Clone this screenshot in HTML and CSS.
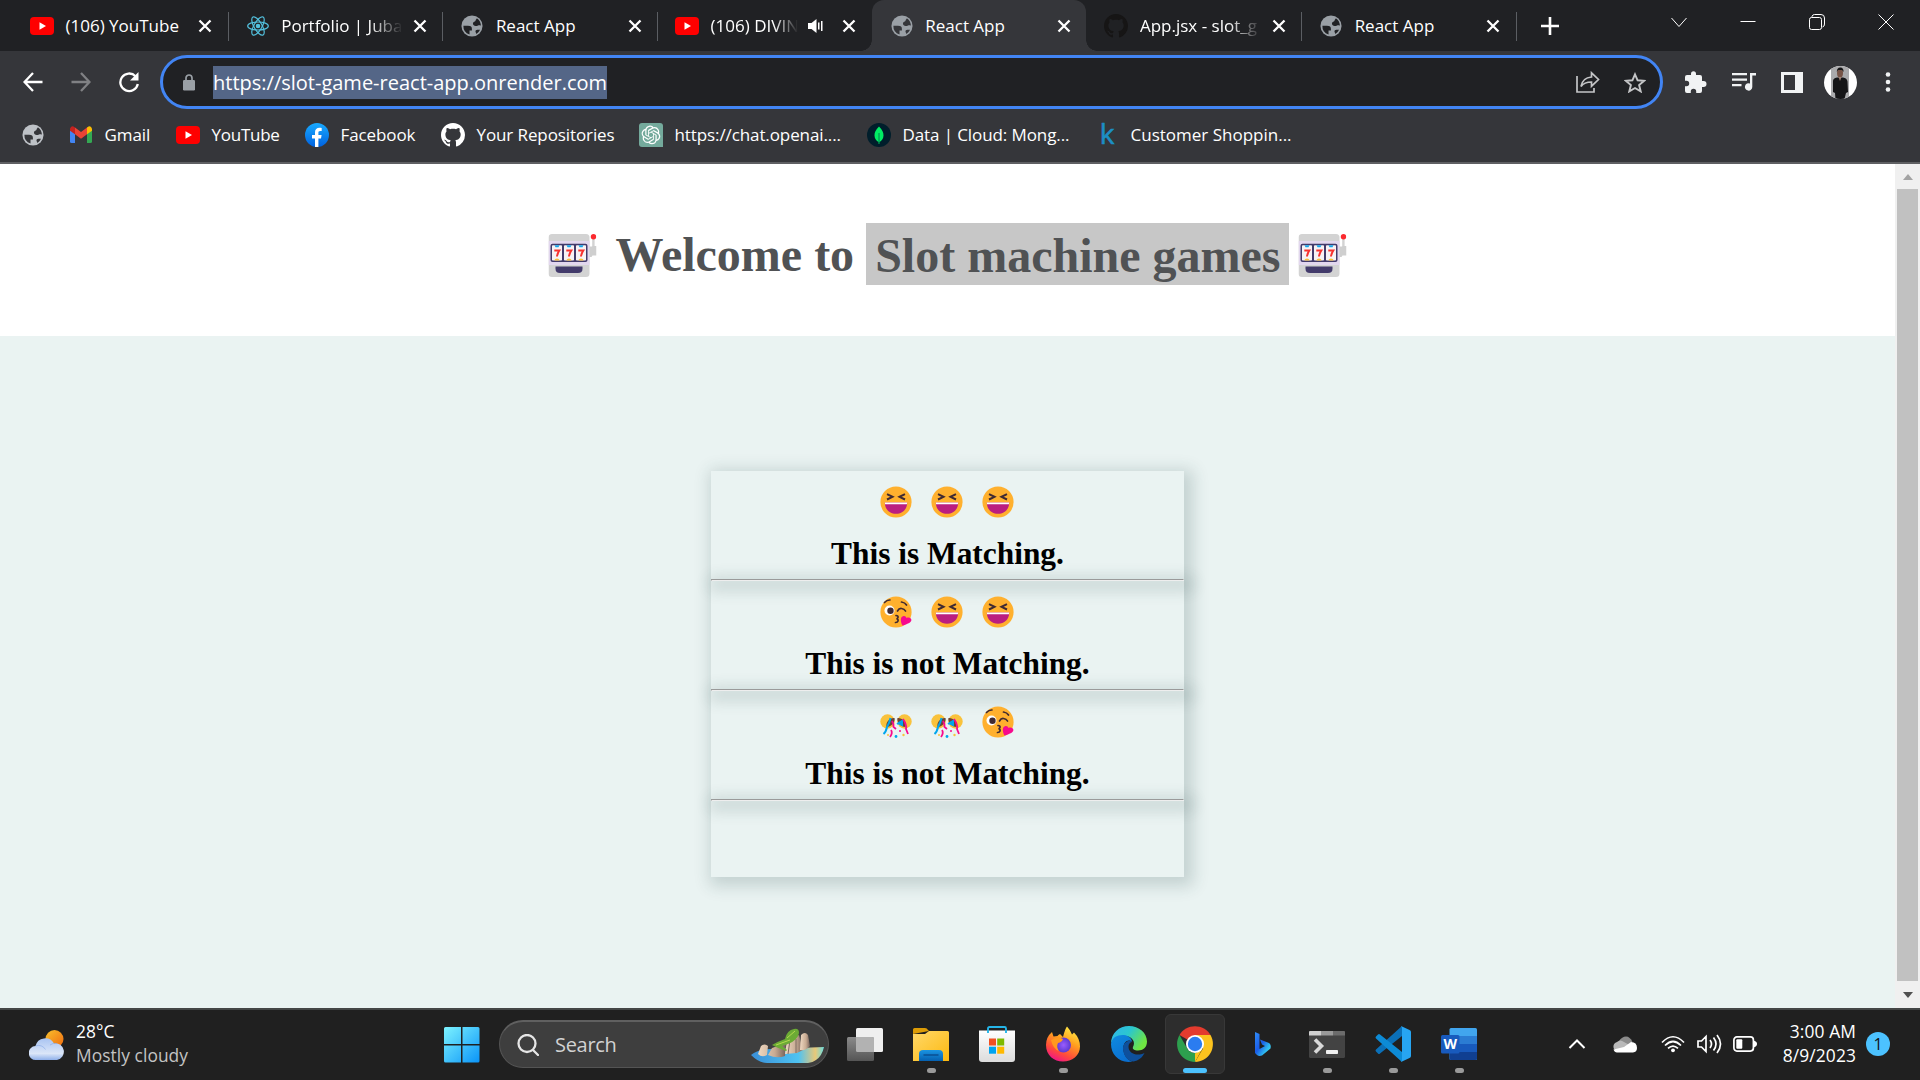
FILE: index.html
```html
<!DOCTYPE html>
<html lang="en">
<head>
<meta charset="utf-8">
<title>React App</title>
<link rel="stylesheet" href="styles.css">
</head>
<body>
<svg class="defs" width="0" height="0" aria-hidden="true">
  <defs>
    <linearGradient id="g-win" x1="0" y1="0" x2="1" y2="1"><stop offset="0" stop-color="#7df3ff"/><stop offset="1" stop-color="#0a94f8"/></linearGradient>
    <linearGradient id="g-sun" x1="0" y1="0" x2="1" y2="1"><stop offset="0" stop-color="#f8c02c"/><stop offset="1" stop-color="#f06a10"/></linearGradient>
    <linearGradient id="g-cloud" x1="0" y1="0" x2="0" y2="1"><stop offset="0" stop-color="#a9c4f2"/><stop offset=".7" stop-color="#dbe6f8"/><stop offset="1" stop-color="#8fb0ea"/></linearGradient>
    <linearGradient id="g-folder" x1="0" y1="0" x2="1" y2="1"><stop offset="0" stop-color="#ffd869"/><stop offset="1" stop-color="#fdb910"/></linearGradient>
    <linearGradient id="g-blue" x1="0" y1="0" x2="0" y2="1"><stop offset="0" stop-color="#1a94e2"/><stop offset="1" stop-color="#0560b0"/></linearGradient>
    <linearGradient id="g-store" x1="0" y1="0" x2="0" y2="1"><stop offset="0" stop-color="#fff"/><stop offset="1" stop-color="#dcdcdc"/></linearGradient>
    <linearGradient id="g-fox" x1=".8" y1="0" x2=".3" y2="1"><stop offset="0" stop-color="#fff04a"/><stop offset=".4" stop-color="#ffa01e"/><stop offset=".75" stop-color="#ff4a3c"/><stop offset="1" stop-color="#f0138a"/></linearGradient>
    <radialGradient id="g-foxball"><stop offset="0" stop-color="#9a5cff"/><stop offset="1" stop-color="#5b3ad0"/></radialGradient>
    <linearGradient id="g-edge1" x1="0" y1="0" x2="1" y2=".5"><stop offset="0" stop-color="#2fb4ee"/><stop offset=".5" stop-color="#2bc6cf"/><stop offset="1" stop-color="#6fe542"/></linearGradient>
    <linearGradient id="g-edge2" x1="0" y1="0" x2=".6" y2="1"><stop offset="0" stop-color="#0f8be0"/><stop offset="1" stop-color="#0a6fd0"/></linearGradient>
    <linearGradient id="g-bing" x1="0" y1="0" x2="1" y2="1"><stop offset="0" stop-color="#2f8df8"/><stop offset=".45" stop-color="#1b5de8"/><stop offset=".75" stop-color="#30c0f0"/><stop offset="1" stop-color="#48d8f8"/></linearGradient>
    <linearGradient id="g-sea" x1="0" y1="0" x2="1" y2="0"><stop offset="0" stop-color="#3a8fd8"/><stop offset=".65" stop-color="#4fc3f2"/><stop offset=".88" stop-color="#e9c878"/><stop offset="1" stop-color="#6cdde0"/></linearGradient>
    <linearGradient id="g-rock" x1="0" y1="0" x2="1" y2="0"><stop offset="0" stop-color="#efd9c2"/><stop offset=".6" stop-color="#c8ab93"/><stop offset="1" stop-color="#75615a"/></linearGradient>
    <linearGradient id="g-fb" x1="0" y1="0" x2="0" y2="1"><stop offset="0" stop-color="#19aaff"/><stop offset="1" stop-color="#0062e0"/></linearGradient>
    <linearGradient id="g-tv" x1="0" y1="0" x2="0" y2="1"><stop offset="0" stop-color="#8a8a8a"/><stop offset="1" stop-color="#555"/></linearGradient>

    <symbol id="youtube" viewBox="0 0 24 18"><rect width="24" height="18" rx="4" fill="#f00"/><path d="M9.5 5.2v7.6l6.5-3.8z" fill="#fff"/></symbol>
    <symbol id="globe" viewBox="0 0 24 24"><circle cx="12" cy="12" r="11.5"/><path class="globe-cut" d="M2.6 11.8h5c3.3 0 4.3 1.3 4.3 3.4v1.6h-2.6v4.6A9.8 9.8 0 0 1 2.6 11.8zM21.6 12c-.3-.8-1.2-.8-2.4-.8-1 0-1 .9-3.3.9-1.5 0-2.9-1.2-2.9-2.7 0-1.3 1-1.4 2.4-2.5.7-.6.3-1.600 1-2.100.6-.4.9-.6.9-1.200A9.800 9.800 0 0 1 21.600 12zM16.500 20.600c2.300-1.300 3.500-3 4.300-4.600h-3c-1.300 0-2 .8-2 1.800 0 1.200.7 1.500.7 2.800z"/></symbol>
    <symbol id="github" viewBox="0 0 16 16"><path d="M8 0C3.58 0 0 3.58 0 8c0 3.54 2.29 6.53 5.47 7.59.4.07.55-.17.55-.38 0-.19-.01-.82-.01-1.49-2.01.37-2.53-.49-2.69-.94-.09-.23-.48-.94-.82-1.13-.28-.15-.68-.52-.01-.53.63-.01 1.08.58 1.23.82.72 1.21 1.87.87 2.33.66.07-.52.28-.87.51-1.07-1.78-.2-3.64-.89-3.64-3.95 0-.87.31-1.59.82-2.15-.08-.2-.36-1.02.08-2.12 0 0 .67-.21 2.2.82.64-.18 1.32-.27 2-.27s1.36.09 2 .27c1.53-1.04 2.2-.82 2.2-.82.44 1.1.16 1.92.08 2.12.51.56.82 1.27.82 2.15 0 3.07-1.87 3.75-3.65 3.95.29.25.54.73.54 1.48 0 1.07-.01 1.93-.01 2.2 0 .21.15.46.55.38A8.01 8.01 0 0 0 16 8c0-4.42-3.58-8-8-8z"/></symbol>
    <symbol id="close" viewBox="0 0 14 14"><path d="M1.500 1.500l11 11M12.500 1.500l-11 11" stroke="#fff" stroke-width="2.300" fill="none"/></symbol>
    <symbol id="slot" viewBox="0 0 48 43">
      <rect y="0" width="41" height="43" rx="3.500" fill="#d3d3d3"/><rect y="7" width="41" height="24" fill="#e2d7ee"/>
      <rect x="43.700" y="3" width="2.400" height="12" fill="#d3d3d3"/><path d="M41 12.500h2.500l1-.5h3.500v9.500h-4l-1 1.500h-2z" fill="#cfcfcf"/><circle cx="45" cy="2.800" r="2.700" fill="#fb2a2f"/>
      <rect x="2" y="9.700" width="37" height="18.300" rx="2" fill="#433b6b"/>
      <g fill="#f7f2f5"><rect x="3.500" y="11.200" width="10" height="15.400" rx=".8"/><rect x="15.500" y="11.200" width="10" height="15.400" rx=".8"/><rect x="27.500" y="11.200" width="10" height="15.400" rx=".8"/></g>
      <g fill="#18a4ea"><path d="M6 11.200h5l-1 2h-3zM18 11.200h5l-1 2h-3zM30 11.200h5l-1 2h-3z"/></g>
      <g fill="#f8c13c"><path d="M6 26.600c0-2.800 5-2.800 5 0zM18 26.600c0-2.800 5-2.800 5 0zM30 26.600c0-2.800 5-2.800 5 0z"/></g>
      <g fill="none" stroke="#f8312f" stroke-width="2"><path d="M5.800 16.500h5q-2 3-2.300 6M17.800 16.500h5q-2 3-2.300 6M29.800 16.500h5q-2 3-2.300 6"/></g>
      <path d="M7 32.500h27v2.200q0 4.300-4.500 4.300h-18q-4.500 0-4.500-4.300z" fill="#433b6b"/>
    </symbol>
    <symbol id="laugh" viewBox="0 0 32 32">
      <circle cx="16" cy="16" r="15.600" fill="#ffb02e"/>
      <path d="M7 8.200l5.500 2.600L7 13.500M25 8.200l-5.500 2.600L25 13.500" fill="none" stroke="#402a32" stroke-width="2"/>
      <path d="M4.800 16.500h22.400c0 7-5 11.300-11.200 11.300S4.800 23.500 4.800 16.500z" fill="#bb1d80"/><path d="M4.800 16.500h22.400l-.3 1.700H5.100z" fill="#fff"/>
    </symbol>
    <symbol id="kiss" viewBox="0 0 32 32">
      <circle cx="16" cy="16" r="15.600" fill="#ffb02e"/><circle cx="9.500" cy="14.500" r="5" fill="#fff"/><circle cx="10.500" cy="14.800" r="3.200" fill="#402a32"/>
      <path d="M4.500 6.500Q7 3.800 10 4M21.500 6q3.500.5 5 3M17.500 15q1.500-2.800 4-2.500 3 .3 4 2.500M16 19.500q2.500.3 2 2-.3 1-1.500 1.300 2 .5 1.500 2.200-.4 1.500-2.500 1.500" fill="none" stroke="#402a32" stroke-width="1.700" stroke-linecap="round"/>
      <path d="M22.500 29.500c-2.200-4-2.400-8.300.5-9.300 2-.6 3 .5 3.500 1.800 1.300-.6 3-.7 4.300.6 1.800 2-.5 5-8.300 6.900z" fill="#f70a8d"/>
    </symbol>
    <symbol id="confetti" viewBox="0 0 32 32">
      <circle cx="7.500" cy="15.500" r="7.200" fill="#f9c23c"/><circle cx="24.500" cy="15.500" r="7.200" fill="#f9c23c"/>
      <path d="M6.500 21C5.500 16 10 11.500 14.500 12c1 3-2.500 9-8 9zM25.500 21c1-5-3.500-9.500-8-9-1 3 2.500 9 8 9z" fill="#6d4534"/>
      <path d="M10.500 12q-1 5-3.500 9-1 5-3.500 7M17 18l5-3v4l-4-2" fill="none" stroke="#00a6ed" stroke-width="2"/>
      <path d="M12 15q2 3 1.500 6l2.500 2M11 24q2 3-1 7M23 13q4 6 3 10l2 5" fill="none" stroke="#f70a8d" stroke-width="1.800"/>
      <circle cx="16" cy="30.500" r="1.400" fill="#00a6ed"/><circle cx="20" cy="25" r="1" fill="#f70a8d"/><circle cx="23.500" cy="29" r="1.200" fill="#f9c23c"/><circle cx="8" cy="29" r="1" fill="#f9c23c"/>
    </symbol>
  </defs>
</svg>

<div class="screen">
  <header class="tabstrip">
    <div class="tab first"><span class="fav"><svg width="24" height="18"><use href="#youtube"/></svg></span><span class="tab-title">(106) YouTube</span><svg class="x" width="14" height="14"><use href="#close"/></svg></div>
    <div class="tab"><span class="fav"><svg width="22" height="22" viewBox="0 0 22 22" fill="none" stroke="#53c1de" stroke-width="1.200"><ellipse cx="11" cy="11" rx="10.300" ry="4"/><ellipse cx="11" cy="11" rx="10.300" ry="4" transform="rotate(60 11 11)"/><ellipse cx="11" cy="11" rx="10.300" ry="4" transform="rotate(120 11 11)"/><circle cx="11" cy="11" r="1.700" fill="#53c1de"/></svg></span><span class="tab-title fade">Portfolio | Juba</span><svg class="x" width="14" height="14"><use href="#close"/></svg></div>
    <div class="tab"><span class="fav globe"><svg width="22" height="22"><use href="#globe"/></svg></span><span class="tab-title">React App</span><svg class="x" width="14" height="14"><use href="#close"/></svg></div>
    <div class="tab no-sep"><span class="fav"><svg width="24" height="18"><use href="#youtube"/></svg></span><span class="tab-title fade">(106) DIVIN</span><svg class="sound" width="16" height="16" viewBox="0 0 16 16" fill="#fff"><path d="M0 5h3.500L8.500 1v14l-5-4H0zM10 4.500h1.500v7H10zM13 3h1.500v10H13z"/></svg><svg class="x" width="14" height="14"><use href="#close"/></svg></div>
    <div class="tab active"><span class="fav globe"><svg width="22" height="22"><use href="#globe"/></svg></span><span class="tab-title">React App</span><svg class="x" width="14" height="14"><use href="#close"/></svg></div>
    <div class="tab"><span class="fav"><svg width="24" height="24" fill="#161515"><use href="#github"/></svg></span><span class="tab-title fade">App.jsx - slot_g</span><svg class="x" width="14" height="14"><use href="#close"/></svg></div>
    <div class="tab"><span class="fav globe"><svg width="22" height="22"><use href="#globe"/></svg></span><span class="tab-title">React App</span><svg class="x" width="14" height="14"><use href="#close"/></svg></div>
    <svg class="new-tab" width="18" height="18" viewBox="0 0 18 18"><path d="M9 0v18M0 9h18" stroke="#fff" stroke-width="2.600"/></svg>
    <div class="window-buttons">
      <svg width="16" height="16" viewBox="0 0 16 16"><path d="M.5 4L8 12.500 15.500 4"/></svg>
      <svg width="16" height="16" viewBox="0 0 16 16"><path d="M.5 7.500h15"/></svg>
      <svg width="16" height="16" viewBox="0 0 16 16"><rect x=".5" y="3.500" width="12" height="12" rx="2"/><path d="M3 3.500V2.500Q3.500.5 5.500.5h6.500q3.500 0 3.500 3.500v6q0 2.500-2 3"/></svg>
      <svg width="16" height="16" viewBox="0 0 16 16"><path d="M.5.5l15 15M15.500.5l-15 15"/></svg>
    </div>
  </header>

  <div class="toolbar">
    <nav class="nav-buttons">
      <svg width="20" height="20" viewBox="0 0 20 20" stroke="#fff"><path d="M19.500 10H1.500M10 1L1.500 10l8.500 9"/></svg>
      <svg width="20" height="20" viewBox="0 0 20 20" stroke="#808184"><path d="M.5 10h18M10 1l8.500 9-8.500 9"/></svg>
      <svg width="22" height="22" viewBox="0 0 22 22" stroke="#fff"><path d="M17.500 5.200A8.800 8.800 0 1 0 19.800 13"/><path d="M20.500 1v8.500H12z" fill="#fff" stroke="none"/></svg>
    </nav>
    <div class="omnibox">
      <svg class="lock" width="12" height="17" viewBox="0 0 12 17"><rect y="6" width="12" height="10.500" rx="1.200" fill="#9aa0a6"/><path d="M3 6.500V4a3 3 0 0 1 6 0v2.500" fill="none" stroke="#9aa0a6" stroke-width="1.700"/></svg>
      <span class="url">https://slot-game-react-app.onrender.com</span>
      <svg class="share" width="24" height="22" viewBox="0 0 24 22" fill="none" stroke="#c4c5c7" stroke-width="1.700"><path d="M1 5v16h17v-4"/><path d="M5 15.500C6 9.500 10 6.500 15.500 6V1.800L22.500 8.500l-7 6.700V11C10.500 11 7.500 12 5 15.500z"/></svg>
      <svg width="22" height="21" viewBox="0 0 22 21" fill="none" stroke="#c4c5c7" stroke-width="1.900"><path d="M11 2.300l2.600 6 6.500.5-5 4.300 1.600 6.300L11 16l-5.700 3.400 1.600-6.300-5-4.300 6.500-.5z"/></svg>
    </div>
    <div class="actions">
      <svg width="22" height="22" viewBox="0 0 22 22" fill="#f1f3f4"><path d="M18.500 10H17V6a2 2 0 0 0-2-2h-4V2.700a2.500 2.500 0 0 0-5 0V4H2a2 2 0 0 0-2 2v3.800h1.500a2.700 2.700 0 0 1 0 5.400H0V20a2 2 0 0 0 2 2h3.800v-1.500a2.700 2.700 0 0 1 5.400 0V22H15a2 2 0 0 0 2-2v-4h1.500a3 3 0 0 0 0-6z"/></svg>
      <svg width="24" height="20" viewBox="0 0 24 20" fill="#f1f3f4"><path d="M0 1h15v2.200H0zM0 6.500h15v2.200H0zM0 12h9.500v2.200H0zM18 1h6v2.500h-3.700V15a3.700 3.700 0 1 1-2.300-3.500z"/></svg>
      <svg width="22" height="21" viewBox="0 0 22 21"><path fill="#f1f3f4" fill-rule="evenodd" d="M0 0h22v21H0zM3 3v15h11V3z"/></svg>
      <svg width="33" height="33" viewBox="0 0 33 33"><clipPath id="av"><circle cx="16.500" cy="16.500" r="16.500"/></clipPath><g clip-path="url(#av)"><rect width="33" height="33" fill="#fff"/><rect x="7" width="18" height="33" fill="#aaaaac"/><path d="M9 15q0-3 4-3.500h6q4 .5 4.500 4L24 26l-2 1-1.500 6h-9L11 27l-2-1z" fill="#151517"/><ellipse cx="16" cy="7" rx="3" ry="4.500" fill="#765447"/><path d="M12.800 6q0-4.500 3.500-4.500T19.500 6L18 4h-4z" fill="#151517"/><path d="M14.500 11h3L16 15z" fill="#a08275"/></g></svg>
      <svg width="6" height="20" viewBox="0 0 6 20" fill="#f1f3f4"><circle cx="3" cy="2.500" r="2.300"/><circle cx="3" cy="10" r="2.300"/><circle cx="3" cy="17.500" r="2.300"/></svg>
    </div>
  </div>

  <nav class="bookmarks">
    <div class="bm globe light"><span class="bm-icon"><svg width="22" height="22"><use href="#globe"/></svg></span></div>
    <div class="bm"><span class="bm-icon"><svg width="22" height="17" viewBox="0 0 22 17"><path d="M0 2.500V15.500Q0 17 1.500 17H5V7.500z" fill="#4285f4"/><path d="M17 7.500V17h3.500q1.500 0 1.500-1.500v-13z" fill="#34a853"/><path d="M5 1.500v6.800l6 4.500 6-4.500V1.500l-6 4.500z" fill="#ea4335"/><path d="M0 2.700v2L5 8.300V1.500L3.500.5Q1-.8 0 2.700z" fill="#c5221f"/><path d="M22 2.700v2l-5 3.600V1.500L18.500.5Q21-.8 22 2.700z" fill="#fbbc04"/></svg></span>Gmail</div>
    <div class="bm tight"><span class="bm-icon"><svg width="24" height="18"><use href="#youtube"/></svg></span>YouTube</div>
    <div class="bm"><span class="bm-icon"><svg width="24" height="24" viewBox="0 0 24 24"><circle cx="12" cy="12" r="12" fill="url(#g-fb)"/><path d="M10 24v-8.500H7V12h3V9.300C10 6.300 11.800 4.700 14.400 4.700c.9 0 1.700.1 2.300.2v3h-1.500C13.700 7.900 13.400 8.700 13.400 9.600V12h3.200l-.6 3.500h-2.600V24z" fill="#fff"/></svg></span>Facebook</div>
    <div class="bm"><span class="bm-icon"><svg width="24" height="24" fill="#fff"><use href="#github"/></svg></span>Your Repositories</div>
    <div class="bm"><span class="bm-icon"><svg width="24" height="24" viewBox="0 0 24 24"><path d="M3 0h18a3 3 0 0 1 3 3v21H3a3 3 0 0 1-3-3V3a3 3 0 0 1 3-3z" fill="#74aa9c"/><path transform="translate(2.600 2.600) scale(.78)" fill="#fff" d="M22.2819 9.8211a5.9847 5.9847 0 0 0-.5157-4.9108 6.0462 6.0462 0 0 0-6.5098-2.9A6.0651 6.0651 0 0 0 4.9807 4.1818a5.9847 5.9847 0 0 0-3.9977 2.9 6.0462 6.0462 0 0 0 .7427 7.0966 5.98 5.98 0 0 0 .511 4.9107 6.051 6.051 0 0 0 6.5146 2.9001A5.9847 5.9847 0 0 0 13.2599 24a6.0557 6.0557 0 0 0 5.7718-4.2058 5.9894 5.9894 0 0 0 3.9977-2.9001 6.0557 6.0557 0 0 0-.7475-7.0729zm-9.022 12.6081a4.4755 4.4755 0 0 1-2.8764-1.0408l.1419-.0804 4.7783-2.7582a.7948.7948 0 0 0 .3927-.6813v-6.7369l2.02 1.1686a.071.071 0 0 1 .038.052v5.5826a4.504 4.504 0 0 1-4.4945 4.4944zm-9.6607-4.1254a4.4708 4.4708 0 0 1-.5346-3.0137l.142.0852 4.783 2.7582a.7712.7712 0 0 0 .7806 0l5.8428-3.3685v2.3324a.0804.0804 0 0 1-.0332.0615L9.74 19.9502a4.4992 4.4992 0 0 1-6.1408-1.6464zM2.3408 7.8956a4.485 4.485 0 0 1 2.3655-1.9728V11.6a.7664.7664 0 0 0 .3879.6765l5.8144 3.3543-2.0201 1.1685a.0757.0757 0 0 1-.071 0l-4.8303-2.7865A4.504 4.504 0 0 1 2.3408 7.872zm16.5963 3.8558L13.1038 8.364 15.1192 7.2a.0757.0757 0 0 1 .071 0l4.8303 2.7913a4.4944 4.4944 0 0 1-.6765 8.1042v-5.6772a.79.79 0 0 0-.407-.667zm2.0107-3.0231l-.142-.0852-4.7735-2.7818a.7759.7759 0 0 0-.7854 0L9.409 9.2297V6.8974a.0662.0662 0 0 1 .0284-.0615l4.8303-2.7866a4.4992 4.4992 0 0 1 6.6802 4.66zM8.3065 12.863l-2.02-1.1638a.0804.0804 0 0 1-.038-.0567V6.0742a4.4992 4.4992 0 0 1 7.3757-3.4537l-.142.0805L8.704 5.459a.7948.7948 0 0 0-.3927.6813zm1.0976-2.3654l2.602-1.4998 2.6069 1.4998v2.9994l-2.5974 1.4997-2.6067-1.4997Z"/></svg></span>https://chat.openai....</div>
    <div class="bm"><span class="bm-icon"><svg width="24" height="24" viewBox="0 0 24 24"><circle cx="12" cy="12" r="12" fill="#001e2b"/><path d="M12 3.500c3.500 3.500 4.500 6 4.500 9 0 3-2 5.500-4 6.500l-.2 2h-.6l-.2-2c-2-1-4-3.500-4-6.500 0-3 1-5.500 4.500-9z" fill="#00ed64"/><path d="M12 10v10" stroke="#00684a" stroke-width=".8"/></svg></span>Data | Cloud: Mong...</div>
    <div class="bm wide"><span class="bm-icon kaggle">k</span>Customer Shoppin...</div>
  </nav>

  <div class="viewport">
    <main class="page">
      <div class="hero">
        <h1><svg width="49" height="43" viewBox="0 0 48 43"><use href="#slot"/></svg><span class="welcome">Welcome to</span><span class="title">Slot machine games</span><svg width="49" height="43" viewBox="0 0 48 43"><use href="#slot"/></svg></h1>
      </div>
      <section class="board">
        <div class="card">
          <div class="row"><div class="reels"><svg width="32" height="32"><use href="#laugh"/></svg><svg width="32" height="32"><use href="#laugh"/></svg><svg width="32" height="32"><use href="#laugh"/></svg></div><h2>This is Matching.</h2></div>
          <hr>
          <div class="row"><div class="reels"><svg width="32" height="32"><use href="#kiss"/></svg><svg width="32" height="32"><use href="#laugh"/></svg><svg width="32" height="32"><use href="#laugh"/></svg></div><h2>This is not Matching.</h2></div>
          <hr>
          <div class="row"><div class="reels"><svg width="32" height="32"><use href="#confetti"/></svg><svg width="32" height="32"><use href="#confetti"/></svg><svg width="32" height="32"><use href="#kiss"/></svg></div><h2>This is not Matching.</h2></div>
          <hr>
        </div>
      </section>
    </main>
    <div class="scrollbar"><i class="arrow up"></i><i class="thumb"></i><i class="arrow down"></i></div>
  </div>

  <footer class="taskbar">
    <div class="weather">
      <svg width="36" height="31" viewBox="0 0 36 31"><circle cx="25.500" cy="9" r="9" fill="url(#g-sun)"/><path d="M7 30a7 7 0 0 1-.5-14A10 10 0 0 1 25 13.500a8.300 8.300 0 0 1 3 16.500z" fill="url(#g-cloud)"/><path d="M6.500 16a8 8 0 0 1 10 3.500M21 15q3-2.500 7-1.500" stroke="#86a8e8" fill="none" opacity=".6"/></svg>
      <div class="weather-text"><b>28°C</b><span>Mostly cloudy</span></div>
    </div>
    <div class="center">
      <div class="app start"><svg width="36" height="36" viewBox="0 0 36 36"><path d="M1.500 0H17v17H0V1.500Q0 0 1.500 0zM18.500 0h15.500q1.500 0 1.500 1.500V17h-17zM0 18.500h17v17H1.500Q0 35.500 0 34zM18.500 18.500h17V34q0 1.500-1.500 1.500H18.500z" fill="url(#g-win)"/></svg></div>
      <div class="search">
        <svg width="22" height="22" viewBox="0 0 22 22" fill="none" stroke="#e6e6e6" stroke-width="2.300" stroke-linecap="round"><circle cx="10" cy="9.500" r="8.500"/><path d="M16 16l5 5"/></svg>
        <span>Search</span>
        <svg class="island" width="74" height="36" viewBox="0 0 74 36"><path d="M0 27Q8 21 20 21l53-2q-2 9-8 13-4 3-8 3H16Q8 35 0 27z" fill="url(#g-sea)"/><path d="M7 26l3-8q4-3 7 0l-1 9q-5 3-9-1zM17 27l4-7 14-5-1 13q-8 3-17-1z" fill="url(#g-rock)"/><path d="M34 26l2-14 12-5 4 15-6 3z" fill="url(#g-rock)"/><path d="M49 22l1-15q4-4 7 0l2 11q-4 5-10 4z" fill="url(#g-rock)"/><path d="M39 12l-2 14M45 11v14" stroke="#7d6a62"/><path d="M21 17Q28 13 34 11q2-9 9-10 5-1 5 4-1 7-11 11l-6 2 5 4-1 1-10-4z" fill="#6cab35"/><path d="M36 10l8-7M25 17l14-5" stroke="#b5d94e"/></svg>
      </div>
      <div class="app"><svg width="36" height="34" viewBox="0 0 36 34"><rect x="9" y="1" width="27" height="24" rx="1.500" fill="#efefef"/><rect x="0" y="10" width="27" height="24" rx="1.500" fill="url(#g-tv)"/><path d="M9 10h16.500q1.500 0 1.500 1.500V25H10.500Q9 25 9 23.500z" fill="#b2b2b2"/></svg></div>
      <div class="app running"><svg width="36" height="34" viewBox="0 0 36 34"><path d="M0 7V2.500Q0 1 1.500 1H12q2 0 3 2l1 1z" fill="#dd9c06"/><path d="M0 7h12l4-3h18.500Q36 4 36 5.500V34H0z" fill="url(#g-folder)"/><path d="M6 34V27q0-4 4-4h16q4 0 4 4v7z" fill="url(#g-blue)"/><path d="M10.500 28h15" stroke="#0a4f92" stroke-width="1.500"/></svg></div>
      <div class="app"><svg width="36" height="36" viewBox="0 0 36 36"><path d="M0 4.500h36V33q0 3-3 3H3q-3 0-3-3z" fill="url(#g-store)"/><path d="M9 7V2.500Q9 1 10.500 1h15q1.500 0 1.500 1.500V7" fill="none" stroke="#25b5e8" stroke-width="1.900"/><path d="M10 12.500h7v7h-7z" fill="#f25022"/><path d="M18.200 12.500h7v7h-7z" fill="#7fba00"/><path d="M10 20.700h7v7h-7z" fill="#00a4ef"/><path d="M18.200 20.700h7v7h-7z" fill="#ffb900"/></svg></div>
      <div class="app running"><svg width="36" height="36" viewBox="0 0 36 36"><path d="M22 .5q3 3 5 8l2-2q6 6 6 14C35 29.500 27 35.500 18 35.500S1 29.500 1 19q0-8 6-13l1.500 4.500 4-.5Q13 9 15 8l3 3q2-8 4-10.500z" fill="url(#g-fox)"/><circle cx="18.500" cy="19" r="7.500" fill="url(#g-foxball)"/><path d="M6 14q7-4 12-1-1 3-5 4-2 4 1 8-6-2-8-11z" fill="#ff9a1f"/></svg></div>
      <div class="app"><svg width="36" height="36" viewBox="0 0 36 36"><path d="M0 18C0 7 8 0 18 0s18 7 18 15.500c0 6-4 9-9 9-3.500 0-6-1.500-5-3.500 3-5-1-11-8-11C7 10 1 13 0 18z" fill="url(#g-edge1)"/><path d="M0 18C1 11 7 8.500 13 9c5 .5 8 4 8 7-4-4-10 1-8.500 9 1 5 5 10 9 10.500C9 38 0 29 0 18z" fill="url(#g-edge2)"/><path d="M19 14.500c-6 1-8 6-6.500 11.500 1.500 6 6 9.500 10 9.500 5-1 9-4 11-8.500-8 4-16 0-16-6 0-3 1-4 3-5z" fill="#0e509c"/></svg></div>
      <div class="app current running"><svg width="36" height="36" viewBox="0 0 36 36"><path d="M18 18L2.500 9A18 18 0 0 1 33.500 9z" fill="#e33b2e"/><path d="M18 9h15.500A18 18 0 0 1 18 36l8-13.500z" fill="#fcc31e"/><path d="M2.500 9l7.700 13.500q2.800 4.500 8 4.500l4-.5L18 36A18 18 0 0 1 2.500 9z" fill="#2da04e"/><path d="M18 27.500l7.500-5L18 36z" fill="#fcc31e"/><circle cx="18" cy="18" r="9" fill="#fff"/><circle cx="18" cy="18" r="7.200" fill="#2b7cf0"/></svg></div>
      <div class="app bing"><svg width="18" height="26" viewBox="0 0 18 26"><path d="M1 1l4.500 2v15L11 15l-3-1.500-2-5 9 3.500q2.500 2 1.500 5.500L8 24.500q-3 1-5-.5l-2-2z" fill="url(#g-bing)"/></svg></div>
      <div class="app running"><svg width="36" height="28" viewBox="0 0 36 28"><rect y="1" width="36" height="27" rx="1.500" fill="#434343"/><path d="M0 5.500V2Q0 1 1 1h11v4.500z" fill="#cfcfcf"/><path d="M12 1h12v4.500H12z" fill="#9a9a9a"/><path d="M24 1h11q1 0 1 1v3.500H24z" fill="#6c6c6c"/><path d="M6 9.500l6.500 6.500L6 22.500" fill="none" stroke="#d9d9d9" stroke-width="3.600"/><rect x="17" y="20" width="12" height="4" rx=".8" fill="#f0f0f0"/></svg></div>
      <div class="app running"><svg width="36" height="36" viewBox="0 0 36 36"><path d="M27 0L1 23.500q-1 1 0 2l2 2q1 1 2 0L27 10z" fill="#0b70b8"/><path d="M27 36L1 12.500q-1-1 0-2l2-2q1-1 2 0L27 26z" fill="#0d8bd6"/><path d="M26 0l8.500 4Q36 4.700 36 6v24q0 1.300-1.500 2L26 36q1-1 1-2V2q0-1-1-2z" fill="#27a5f2"/></svg></div>
      <div class="app running"><svg width="36" height="32" viewBox="0 0 36 32"><rect x="8.500" width="27.500" height="32" rx="1.500" fill="#41a5ee"/><path d="M8.500 8H36v8H8.500z" fill="#2b7cd3"/><path d="M8.500 16H36v8H8.500z" fill="#185abd"/><path d="M8.500 24H36v6.500q0 1.500-1.500 1.500H10q-1.500 0-1.500-1.500z" fill="#103f91"/><rect x="0" y="7" width="18.500" height="18.500" rx="1.500" fill="#185abd"/><text class="word-letter" x="9.200" y="21.200" text-anchor="middle">W</text></svg></div>
    </div>
    <div class="tray">
      <svg width="18" height="12" viewBox="0 0 18 12" fill="none" stroke="#fff" stroke-width="2"><path d="M1.500 10L9 2.500l7.500 7.500"/></svg>
      <svg class="onedrive" width="24" height="17" viewBox="0 0 24 17"><path d="M6 5Q9 .5 13 .5T19.500 6L12 10z" fill="#8c8c8c"/><path d="M1 13Q-1 8 4 6q3-3 7 0l9 5-9 5z" fill="#b9b9b9"/><path d="M11 11l7-5q6 0 6 6 0 4-4 4.500H4q-2.500 0-3.500-3z" fill="#fff"/></svg>
      <svg class="wifi" width="24" height="18" viewBox="0 0 24 18" fill="none" stroke="#fff" stroke-width="1.700"><path d="M1 7.500Q12-4 23 7.500M4 10.500q8-8 16 0M7 13.300q5-4.500 10 0"/><circle cx="12" cy="15.300" r="1.900" fill="#fff" stroke="none"/></svg>
      <svg class="volume" width="25" height="20" viewBox="0 0 25 20" fill="none" stroke="#fff" stroke-width="1.700"><path d="M1 7h3.500L9 2.500v15L4.500 13H1zM13 6q3 4 0 8M16.500 3.500q5 6.500 0 13M20 1q7 9 0 18"/></svg>
      <svg width="24" height="16" viewBox="0 0 24 16"><rect x=".9" y=".9" width="19.500" height="14.200" rx="3" fill="none" stroke="#fff" stroke-width="1.700"/><rect x="3.300" y="3.300" width="6" height="9.400" rx="1" fill="#fff"/><path d="M21 4.800q3 .8 3 3.200t-3 3.200z" fill="#fff"/></svg>
      <div class="clock"><span>3:00 AM</span><span>8/9/2023</span></div>
      <span class="badge">1</span>
    </div>
  </footer>
</div>
</body>
</html>
```
FILE: styles.css
```css
* { box-sizing: border-box; }
body { margin: 0; font-family: "Open Sans", "Noto Sans", sans-serif; }
svg { display: block; flex: none; }
.defs { position: absolute; }
.screen { width: 1920px; height: 1080px; display: flex; flex-direction: column; overflow: hidden; }

/* tab strip */
.tabstrip { height: 51px; flex: none; display: flex; align-items: stretch; padding-left: 13px; background: #202124; color: #fff; }
.tab { position: relative; width: 214.700px; flex: none; display: flex; align-items: center; padding: 0 15.500px 0 18px; font-size: 17px; white-space: nowrap; }
.tab.first { padding-left: 17px; }
.tab::after { content: ""; position: absolute; right: -1px; top: 12px; width: 1px; height: 29px; background: #5b5e63; }
.tab.no-sep::after, .tab.active::after { content: none; }
.fav { width: 24px; margin-right: 11.500px; display: flex; justify-content: center; }
.tab-title { flex: 1; min-width: 0; line-height: 30px; }
.tab-title.fade { margin-right: 10px; -webkit-mask-image: linear-gradient(90deg, #000 72%, transparent 100%); mask-image: linear-gradient(90deg, #000 72%, transparent 100%); }
.sound { margin-right: 18px; }
.globe { fill: #9aa0a6; --cut: #202124; }
.globe.light { fill: #bdc1c6; --cut: #35363a; }
.globe-cut { fill: var(--cut); }
.tab.active { background: #35363a; border-radius: 12px 12px 0 0; }
.tab.active .globe { --cut: #35363a; }
.tab.active::before { content: ""; position: absolute; left: -11px; right: -11px; bottom: 0; height: 11px; background: radial-gradient(circle at 0 0, transparent 10.500px, #35363a 11px) left / 11px 11px no-repeat, radial-gradient(circle at 100% 0, transparent 10.500px, #35363a 11px) right / 11px 11px no-repeat; }
.new-tab { align-self: center; margin-left: 25px; }
.window-buttons { margin-left: auto; padding: 14px 26px 0 0; display: flex; gap: 53px; fill: none; stroke: #fff; }

/* toolbar */
.toolbar { height: 62px; flex: none; display: flex; align-items: center; background: #35363a; }
.nav-buttons { width: 160px; padding-left: 23px; display: flex; align-items: center; gap: 27.500px; fill: none; stroke-width: 2.300px; }
.omnibox { width: 1503px; height: 54px; display: flex; align-items: center; padding: 0 14px 0 19px; border: 3px solid #4285f4; border-radius: 27px; background: #202124; color: #fff; }
.lock { margin: 0 18px 0 1px; }
.url { font-size: 20px; line-height: 33px; background: #546687; }
.share { margin-left: auto; margin-right: 24px; }
.actions { display: flex; align-items: center; padding-left: 21.500px; gap: 25px; }
.actions svg:nth-child(4) { margin-left: -4px; }
.actions svg:nth-child(5) { margin-left: 3px; }

/* bookmarks */
.bookmarks { height: 51px; flex: none; display: grid; grid-template-columns: 48px 107px 129px 136px 198px 228px 228px 240px; align-items: center; padding: 0 0 6px 21px; background: #35363a; border-bottom: 2px solid #5f6063; color: #fff; font-size: 17px; letter-spacing: -.1px; }
.bm { display: flex; align-items: center; white-space: nowrap; line-height: 24px; }
.bm.tight { letter-spacing: -.25px; }
.bm.wide { letter-spacing: 0; }
.bm-icon { width: 24px; height: 24px; margin-right: 11.500px; display: flex; align-items: center; justify-content: center; }
.kaggle { color: #1c8fc4; font-size: 28px; line-height: 24px; padding-bottom: 3px; -webkit-text-stroke: .6px #1c8fc4; }

/* page */
.viewport { height: 844px; flex: none; display: flex; }
.page { flex: 1; background: #eaf3f2; }
.hero { height: 172px; background: #fff; }
h1 { margin: 0; padding-top: 59px; display: flex; justify-content: center; align-items: flex-start; font: bold 48px/62px "Liberation Serif", "Times New Roman", serif; color: #505254; }
h1 svg { margin-top: 11px; }
.welcome { margin: 0 12px 0 19px; line-height: 64px; }
.title { padding: 0 9px; margin-right: 9px; background: #c7c7c7; line-height: 62px; padding-top: 2px; height: 62px; }
.board { padding-top: 135px; display: flex; justify-content: center; }
.card { width: 473px; height: 406px; box-shadow: 4px 4px 15px 5px rgba(30, 70, 70, .19); }
.row { height: 108px; padding-top: 15px; }
.reels { display: flex; justify-content: center; gap: 19px; padding-right: 1px; }
h2 { margin: 12px 0 0; font: bold 31.400px/48px "Liberation Serif", "Times New Roman", serif; text-align: center; color: #000; }
hr { margin: 0; height: 2px; border: 1px solid; border-color: #9a9a9a #eee #eee #9a9a9a; box-shadow: 4px 4px 15px 5px rgba(30, 70, 70, .19); }
.scrollbar { width: 25px; display: flex; flex-direction: column; align-items: center; background: #f0f0f0; }
.arrow { width: 25px; height: 25px; display: flex; align-items: center; justify-content: center; }
.arrow.down { height: 27px; }
.arrow::before { content: ""; border: 5.500px solid transparent; }
.arrow.up::before { border-bottom: 6px solid #a3a3a3; border-top: 0; }
.arrow.down::before { border-top: 6px solid #505050; border-bottom: 0; }
.thumb { width: 21px; flex: 1; background: #c1c1c1; }

/* taskbar */
.taskbar { height: 72px; flex: none; display: flex; background: #202020; border-top: 2px solid #444646; color: #fff; font-size: 17.400px; }
.weather { width: 428px; display: flex; padding-left: 29px; gap: 11px; }
.weather > svg { margin-top: 20px; }
.weather-text, .clock { display: flex; flex-direction: column; line-height: 24px; padding-top: 9px; }
.weather-text { letter-spacing: .050px; }
.weather-text b { font-weight: 400; }
.weather-text span { color: #c3c3c3; }
.center { display: flex; align-items: flex-start; }
.app { position: relative; width: 60px; height: 60px; margin: 4px 6px 0 0; display: flex; align-items: center; justify-content: center; border-radius: 6px; }
.app.start { width: 67px; margin-right: 4px; padding-top: 1px; }
.app.bing { padding-left: 4px; }
.app.current { background: #2d2d2d; border: 1px solid #383838; }
.app.running::after { content: ""; position: absolute; left: 50%; bottom: 1px; width: 9px; height: 5px; margin-left: -4.500px; border-radius: 3px; background: #9a9a9a; }
.app.current::after { width: 24px; margin-left: -12px; bottom: 0; background: #4cc2ff; }
.search { width: 330px; height: 48px; margin: 10px 6px 0 0; display: flex; align-items: center; padding: 0 3px 0 17px; border: 1px solid #545454; border-top: 2px solid #606060; border-radius: 24px; background: #3e3e3e; color: #d2d2d2; font-size: 20px; letter-spacing: -.3px; }
.search span { margin-left: 16px; }
.island { margin-left: auto; margin-top: 3px; }
.word-letter { font: bold 14px "Open Sans", sans-serif; fill: #fff; }
.tray { margin-left: auto; padding-right: 30px; display: flex; align-items: center; height: 68px; }
.onedrive { margin-left: 27px; }
.wifi { margin-left: 24px; }
.volume { margin: 0 11px 0 12px; }
.clock { width: 99px; text-align: right; align-self: flex-start; letter-spacing: .1px; }
.badge { width: 24px; height: 24px; margin-left: 10px; border-radius: 50%; background: #4cc2ff; color: #111; font-size: 16px; line-height: 24px; text-align: center; }
```
